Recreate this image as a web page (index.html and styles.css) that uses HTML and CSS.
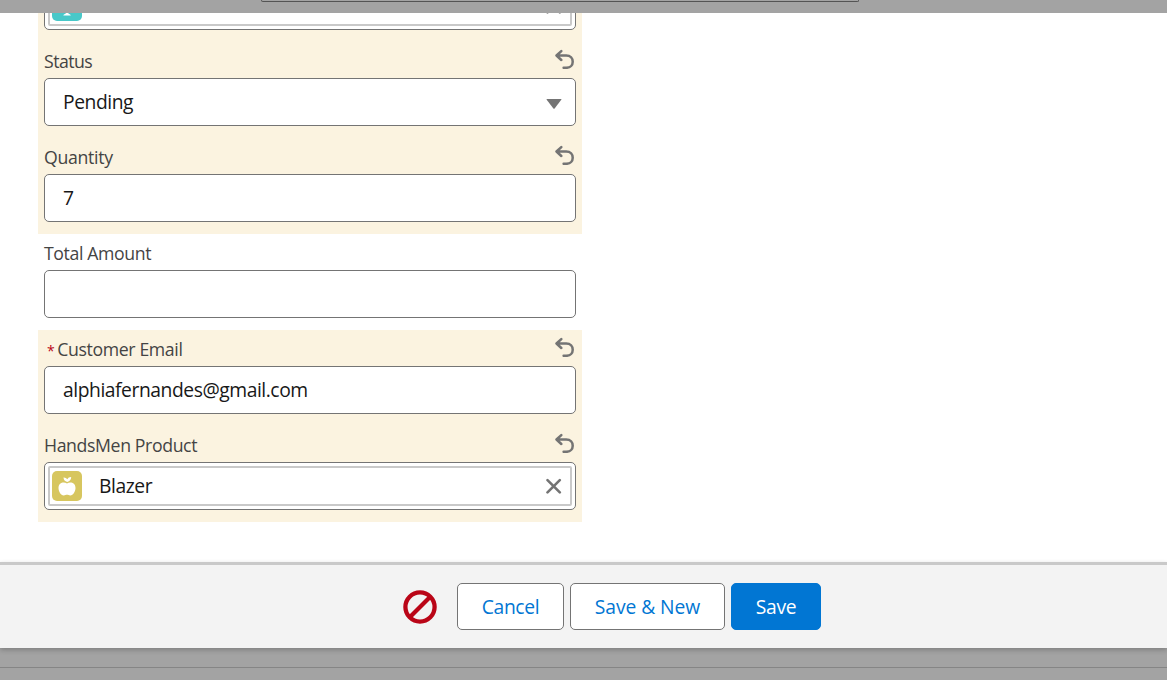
FILE: index.html
```
<!DOCTYPE html>
<html lang="en">
<head>
<meta charset="utf-8">
<title>New Record</title>
<link rel="stylesheet" href="styles.css">
</head>
<body>
<svg class="defs" aria-hidden="true">
  <symbol id="undo" viewBox="0 0 20 20"><path d="M6.300 2.100 1.500 6.500l4.800 4.500M2.300 6.500H11.200C19.900 6.500 19.900 18.800 11.200 18.800H8.600" fill="none" stroke="#747474" stroke-width="2.500" stroke-linecap="round" stroke-linejoin="round"/></symbol>
  <symbol id="close" viewBox="0 0 16 16"><path d="M1.500 2.100 13.800 14.400M13.800 2.100 1.500 14.400" fill="none" stroke="#747474" stroke-width="2.600" stroke-linecap="round"/></symbol>
</svg>
<div class="page">
  <div class="backdrop-top"><div class="search"></div></div>
  <main class="body">
    <form class="form">
      <div class="row edited">
        <div class="label-line"></div>
        <div class="field lookup"><div class="pill">
          <span class="badge customer"><svg viewBox="0 0 30 30" width="30" height="30"><circle cx="15" cy="10" r="5" fill="#fff"/><path d="M11.300 24.500q0-1.300 2.200-1.700l.6-1.300h2l.5 1.300q2.200.4 2.200 1.700z" fill="#fff"/></svg></span>
          <svg class="close" width="16" height="16"><use href="#close"/></svg>
        </div></div>
      </div>
      <div class="row edited">
        <div class="label-line"><label class="l-status">Status</label><svg class="undo" width="20" height="20"><use href="#undo"/></svg></div>
        <div class="field select"><span class="v-pending">Pending</span><svg width="16" height="10" viewBox="0 0 16 10"><path d="M1 0h14q.7.1.3.7L8.6 9.5q-.6.6-1.2 0L.7.7Q.3.1 1 0z" fill="#747474"/></svg></div>
      </div>
      <div class="row edited">
        <div class="label-line"><label class="l-quantity">Quantity</label><svg class="undo" width="20" height="20"><use href="#undo"/></svg></div>
        <div class="field">7</div>
      </div>
      <div class="row">
        <div class="label-line"><label class="l-total">Total Amount</label></div>
        <div class="field"></div>
      </div>
      <div class="row edited">
        <div class="label-line"><label class="l-email"><abbr>*</abbr>Customer Email</label><svg class="undo" width="20" height="20"><use href="#undo"/></svg></div>
        <div class="field"><span class="v-email">alphiafernandes@gmail.com</span></div>
      </div>
      <div class="row edited">
        <div class="label-line"><label class="l-product">HandsMen Product</label><svg class="undo" width="20" height="20"><use href="#undo"/></svg></div>
        <div class="field lookup"><div class="pill">
          <span class="badge product"><svg viewBox="0 0 30 30" width="30" height="30"><path d="M15 12.400C12 10.500 6.500 11.300 6.500 17c0 3.300 2.300 7.400 5.200 7.400 1.500 0 2-.6 3.300-.6s1.800.6 3.300.6c2.900 0 5.200-4.100 5.200-7.400 0-5.700-5.500-6.500-8.500-4.600zM15.200 10.900Q11.800 10.200 11.500 6.500 14 6.300 15.300 8.300 16.400 5.900 19.200 6 19 10.200 15.200 10.900z" fill="#fff"/></svg></span>
          <span class="v-product">Blazer</span>
          <svg class="close" width="16" height="16"><use href="#close"/></svg>
        </div></div>
      </div>
    </form>
  </main>
  <footer class="footer">
    <svg class="stop" width="34" height="34" viewBox="0 0 34 34"><circle cx="17" cy="17" r="14.600" fill="none" stroke="#ba0517" stroke-width="4.300"/><path d="M7 27 27 7" stroke="#ba0517" stroke-width="4.300"/></svg>
    <button class="btn cancel" type="button"><span>Cancel</span></button>
    <button class="btn save-new" type="button"><span>Save &amp; New</span></button>
    <button class="btn save" type="button"><span>Save</span></button>
  </footer>
  <div class="backdrop-bottom"></div>
</div>
</body>
</html>
```
FILE: styles.css
```
* { box-sizing: border-box; }
body { margin: 0; font-family: "Open Sans", "Noto Sans", sans-serif; }
svg { display: block; flex: none; }
.defs { display: none; }
.page { height: 680px; display: flex; flex-direction: column; overflow: hidden; background: #fff; }
.backdrop-top { flex: none; height: 13px; background: #a3a3a3; }
.search { width: 598px; height: 2px; margin-left: 261px; border: 1px solid #545454; border-top: 0; border-radius: 0 0 4px 4px; }
.body { flex: none; height: 549px; overflow: hidden; padding: 0 0 40px 38px; display: flex; flex-direction: column; justify-content: flex-end; }
.form { width: 544px; flex: none; }
.row { height: 96px; padding: 0 6px 12px; }
.edited { background: #fbf3e0; }
.label-line { height: 36px; display: flex; justify-content: space-between; padding: 7px 1px 0 0; font-size: 17.7px; line-height: 25px; letter-spacing: -.38px; color: #444; white-space: nowrap; }
.l-status { letter-spacing: -.55px; }
.l-quantity { letter-spacing: -.3px; }
abbr { color: #ba0517; margin: 0 3px 0 3px; font-size: 14px; }
.field { height: 48px; border: 1px solid #747474; border-radius: 5px; background: #fff; padding: 0 13px 0 18px; display: flex; align-items: center; justify-content: space-between; font-size: 19.3px; line-height: 28px; letter-spacing: -.45px; color: #181818; white-space: nowrap; }
.select svg { margin-top: 3px; }
.lookup { padding: 3px; }
.pill { width: 100%; height: 40px; border: 2px solid #c9c9c9; border-radius: 2px; display: flex; align-items: center; padding: 0 8px 0 2px; }
.badge { width: 30px; height: 30px; border-radius: 5px; margin-right: 17px; flex: none; }
.customer { background: #48c8c9; }
.product { background: #d7c65f; }
.close { margin-left: auto; }
.footer { flex: none; height: 86px; border-top: 3px solid #c9c9c9; background: #f3f3f3; padding: 18px 0 0 403px; display: flex; gap: 6px; align-items: flex-start; position: relative; box-shadow: 0 2px 5px rgba(0,0,0,.22); }
.stop { margin: 7px 14px 0 0; }
.btn { height: 47px; border: 1px solid #747474; border-radius: 5px; background: #fff; color: #0176d3; font: 19.3px/28px "Open Sans", "Noto Sans", sans-serif; letter-spacing: -.35px; padding: 0; white-space: nowrap; }
.cancel { width: 107px; }
.save-new { width: 155px; letter-spacing: -.08px; }
.save { width: 90px; background: #0176d3; border-color: #0176d3; color: #fff; }
.backdrop-bottom { flex: none; height: 32px; background: linear-gradient(#858585 0 1px, transparent 1px) 0 19px no-repeat, #a3a3a3; }
```
